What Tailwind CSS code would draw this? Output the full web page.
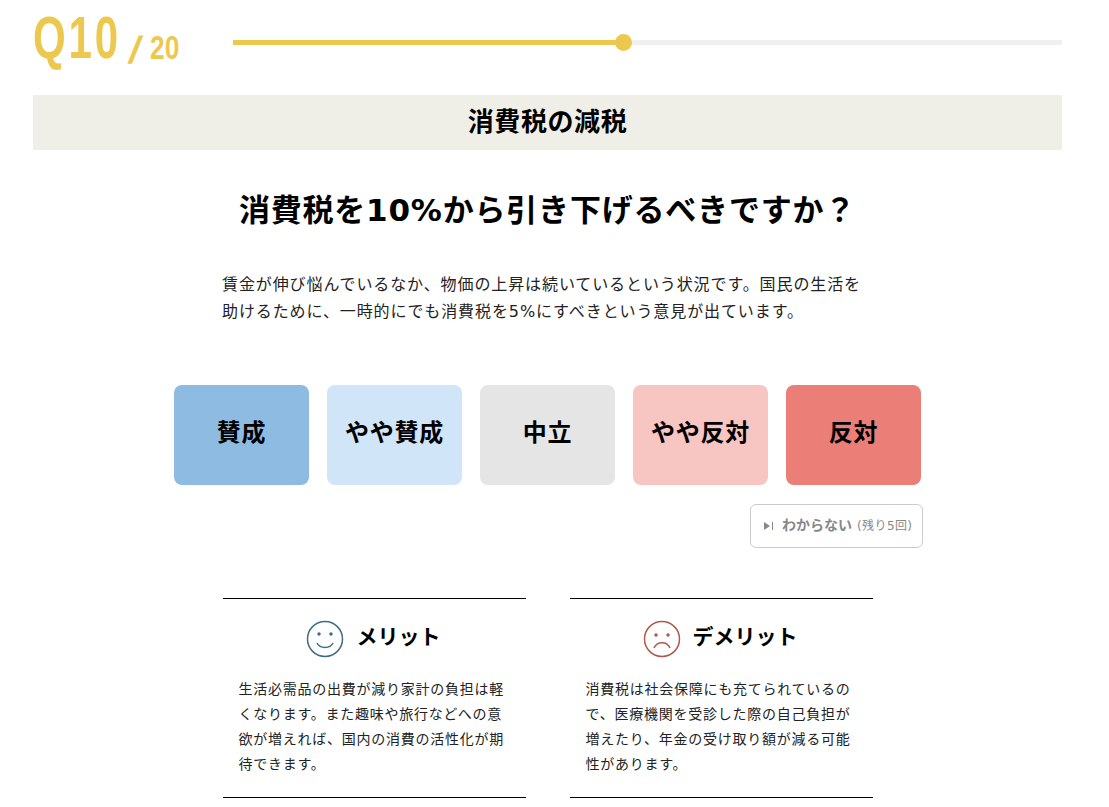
<!DOCTYPE html>
<html lang="ja">
<head>
  <meta charset="UTF-8">
  <title>Q10</title>
  <script src="https://cdn.jsdelivr.net/npm/@tailwindcss/browser@4"></script>
</head>
<body class="bg-white overflow-hidden h-[807px] font-['DejaVu_Sans','Noto_Sans_CJK_JP',sans-serif] text-black">
  <div class="w-[1029px] ml-[33px]">
    <div class="flex items-center h-[95px] pb-[10px]">
      <div class="w-[200px] h-[60px] mt-[-9px] flex items-end text-[#edc84f] font-bold font-['Liberation_Sans',sans-serif]">
        <span class="block w-[97px] text-[60px] leading-[60px] scale-x-[.7] origin-left tracking-[4px]">Q10</span>
        <span class="block w-[20px] text-[38px] leading-[40px] mb-[-2px] -skew-x-[12deg] origin-left">/</span>
        <span class="block text-[33px] leading-[36px] mb-[2px] scale-x-[.8] origin-left">20</span>
      </div>
      <div class="relative flex-1 h-[5px] bg-[#f0f0f0]">
        <div class="h-full w-[391px] bg-[#edc84f]"></div>
        <div class="absolute left-[382px] top-[-6px] w-[17px] h-[17px] rounded-full bg-[#edc84f]"></div>
      </div>
    </div>
    <div class="h-[55px] pb-[1px] bg-[#f0efe7] flex items-center justify-center text-[26px] font-bold tracking-[.6px]">消費税の減税</div>
    <h1 class="text-center text-[31px] font-bold mt-[38px] leading-[44px] tracking-[.8px]">消費税を10%から引き下げるべきですか？</h1>
    <p class="w-[650px] ml-[189px] mt-[39px] text-[16px] leading-[27px] tracking-[.9px] text-[#222]">賃金が伸び悩んでいるなか、物価の上昇は続いているという状況です。国民の生活を助けるために、一時的にでも消費税を5%にすべきという意見が出ています。</p>
    <div class="flex justify-center gap-[18px] mt-[60px] text-[24px] font-bold tracking-[.7px]">
      <div class="w-[135px] h-[100px] pb-[4px] rounded-lg bg-[#8dbbe1] flex items-center justify-center">賛成</div>
      <div class="w-[135px] h-[100px] pb-[4px] rounded-lg bg-[#d0e5f8] flex items-center justify-center">やや賛成</div>
      <div class="w-[135px] h-[100px] pb-[4px] rounded-lg bg-[#e5e5e5] flex items-center justify-center">中立</div>
      <div class="w-[135px] h-[100px] pb-[4px] rounded-lg bg-[#f7c5c2] flex items-center justify-center">やや反対</div>
      <div class="w-[135px] h-[100px] pb-[4px] rounded-lg bg-[#ec7e78] flex items-center justify-center">反対</div>
    </div>
    <div class="flex justify-end w-[890px] mt-[19px]">
      <div class="w-[173px] h-[44px] pl-[12px] border border-[#ccc] rounded-md flex items-center text-[#888]">
        <svg width="11" height="10" viewBox="0 0 11 10"><path d="M1 1l6 4-6 4z" fill="#888"/><path d="M9.5 1v8" stroke="#888"/></svg>
        <span class="ml-[8px] text-[14px] font-bold mt-[-1px]">わからない</span>
        <span class="ml-[5px] text-[12px] tracking-[.4px]">(残り5回)</span>
      </div>
    </div>
    <div class="flex justify-center gap-[44px] mt-[50px]">
      <div class="w-[303px] h-[200px] border-y border-black">
        <div class="flex items-center justify-center gap-[13px] mt-[21px] mr-[2px] h-[38px]">
          <svg width="38" height="38" viewBox="0 0 38 38" fill="none" stroke="#3d6d85" stroke-width="1.5"><circle cx="19" cy="19" r="17.5"/><path d="M11 23c3 6 13 6 16 0"/><circle cx="13" cy="14" r="1" fill="#3d6d85"/><circle cx="25" cy="14" r="1" fill="#3d6d85"/></svg>
          <span class="text-[21px] font-bold mt-[-3px]">メリット</span>
        </div>
        <p class="px-[16px] mt-[19px] text-[14px] leading-[25px] tracking-[.75px] text-[#222]">生活必需品の出費が減り家計の負担は軽くなります。また趣味や旅行などへの意欲が増えれば、国内の消費の活性化が期待できます。</p>
      </div>
      <div class="w-[303px] h-[200px] border-y border-black">
        <div class="flex items-center justify-center gap-[12px] mt-[21px] mr-[2px] h-[38px]">
          <svg width="38" height="38" viewBox="0 0 38 38" fill="none" stroke="#b0584c" stroke-width="1.5"><circle cx="19" cy="19" r="17.5"/><path d="M11 28c3-7 13-7 16 0"/><circle cx="13" cy="15" r="1" fill="#b0584c"/><circle cx="25" cy="15" r="1" fill="#b0584c"/></svg>
          <span class="text-[21px] font-bold mt-[-3px]">デメリット</span>
        </div>
        <p class="px-[16px] mt-[19px] text-[14px] leading-[25px] tracking-[.75px] text-[#222]">消費税は社会保障にも充てられているので、医療機関を受診した際の自己負担が増えたり、年金の受け取り額が減る可能性があります。</p>
      </div>
    </div>
  </div>
</body>
</html>
